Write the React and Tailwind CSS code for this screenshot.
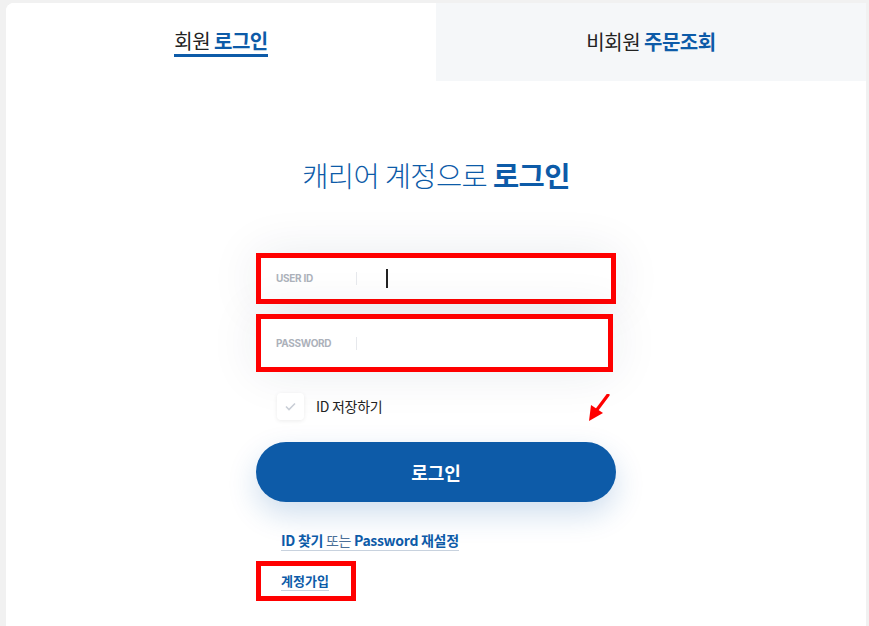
import React from 'react';

const font = { fontFamily: '"Noto Sans CJK KR", "Noto Sans", sans-serif' };

const Field = ({ label, w, h, cursor }) => (
  <div
    className={`flex items-center bg-white border-[5px] border-[#ff0000] shadow-[0_0_50px_rgba(20,40,80,0.09)] ${w} ${h}`}
  >
    <span className="w-[95px] pl-[15px] text-[10px] font-bold text-[#acb1ba] tracking-[-0.3px] font-['Inter']">
      {label}
    </span>
    <span className="h-[13px] w-px bg-[#e6e8ec]" />
    {cursor && <span className="ml-[29px] h-[19px] w-[1.5px] bg-[#222]" />}
  </div>
);

export default function App() {
  return (
    <div className="min-h-screen bg-[#f1f1f1] pl-[6px] pt-[3px] pr-[3px]" style={font}>
      <div className="bg-white rounded-tl-lg min-h-[623px] overflow-hidden">
        {/* tabs */}
        <div className="flex h-[78px]">
          <div className="w-[430px] flex items-center justify-center bg-white">
            <span className="text-[20px] leading-none font-normal text-[#222] border-b-[3px] border-[#0d5ba8] pb-[3px] mt-[4px] tracking-[-0.5px]">
              회원 <b className="font-bold text-[#0d5ba8]">로그인</b>
            </span>
          </div>
          <div className="flex-1 flex items-center justify-center bg-[#f5f7f9]">
            <span className="text-[20px] leading-none font-normal text-[#222] tracking-[-0.5px]">
              비회원 <b className="font-bold text-[#0d5ba8]">주문조회</b>
            </span>
          </div>
        </div>

        <div className="flex flex-col items-center">
          <h1 className="mt-[74px] text-[28.5px] leading-[40px] font-light text-[#0d5ba8] tracking-[-0.6px]">
            캐리어 계정으로 <b className="font-bold">로그인</b>
          </h1>

          <div className="relative w-[360px] mt-[58px]">
            <Field label="USER ID" w="w-[360px]" h="h-[51px]" cursor />
            <div className="mt-[10px]">
              <Field label="PASSWORD" w="w-[357px]" h="h-[58px]" />
            </div>

            <div className="flex items-center mt-[21px] ml-[21px]">
              <span className="w-[27px] h-[27px] rounded-[4px] bg-white shadow-[0_1px_4px_rgba(0,0,0,0.08)] flex items-center justify-center">
                <svg width="11" height="9" viewBox="0 0 11 9" fill="none">
                  <path d="M1 4.5 L4 7.5 L10 1.5" stroke="#c9ced6" strokeWidth="1.6" />
                </svg>
              </span>
              <span className="ml-[12px] text-[14px] text-[#222] tracking-[-0.3px]">ID 저장하기</span>
            </div>

            <svg className="absolute left-[332px] top-[141px]" width="22" height="28" viewBox="0 0 22 28">
              <path d="M20 1 L8 17" stroke="#ff0000" strokeWidth="3.2" strokeLinecap="round" />
              <path d="M1 27 L3 11 L15 19 Z" fill="#ff0000" />
            </svg>

            <button className="mt-[22px] w-[360px] h-[60px] rounded-full bg-[#0d5ba8] text-white text-[18px] font-bold shadow-[0_12px_30px_rgba(13,91,168,0.2)]">
              로그인
            </button>

            <div className="mt-[28px] ml-[25px] inline-block text-[14px] leading-[20px] text-[#0d5ba8] border-b border-[#c8d2de] tracking-[-0.3px]">
              <b className="font-bold">ID 찾기</b> <span className="text-[#4a6f98]">또는</span>{' '}
              <b className="font-bold">Password 재설정</b>
            </div>

            <div className="mt-[10px] w-[100px] h-[40px] border-[5px] border-[#ff0000] flex items-center pl-[20px]">
              <span className="text-[13px] leading-[18px] font-bold text-[#0d5ba8] border-b border-[#c8d2de]">
                계정가입
              </span>
            </div>
          </div>
        </div>
      </div>
    </div>
  );
}
